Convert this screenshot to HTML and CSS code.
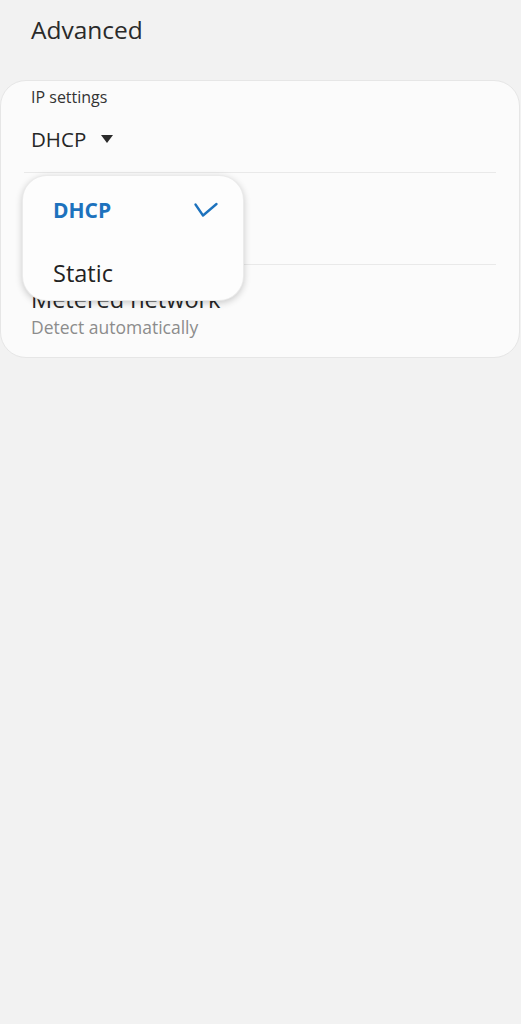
FILE: index.html
```html
<!DOCTYPE html>
<html lang="en">
<head>
<meta charset="utf-8">
<title>Advanced</title>
<link rel="stylesheet" href="styles.css">
</head>
<body>
<header class="header">
  <h1 class="title">Advanced</h1>
</header>
<section class="card">
  <div class="row">
    <div class="label">IP settings</div>
    <div class="value">
      <span>DHCP</span>
      <svg class="caret" width="12" height="8" viewBox="0 0 12 8"><path d="M0 0H12L6 8Z" fill="#2a2a2a"/></svg>
    </div>
  </div>
  <div class="row">
    <div class="label">Proxy</div>
    <div class="value">
      <span>None</span>
      <svg class="caret" width="12" height="8" viewBox="0 0 12 8"><path d="M0 0H12L6 8Z" fill="#2a2a2a"/></svg>
    </div>
  </div>
  <div class="row row-last">
    <div class="item-title">Metered network</div>
    <div class="item-sub">Detect automatically</div>
  </div>

  <div class="popup">
    <div class="option option-selected">
      <span>DHCP</span>
      <svg class="check" width="24" height="16" viewBox="0 0 24 16"><polyline points="1.5,2.5 9,13.5 22.5,2" fill="none" stroke="#1d72bd" stroke-width="2.3" stroke-linecap="round" stroke-linejoin="round"/></svg>
    </div>
    <div class="option option-last">
      <span>Static</span>
    </div>
  </div>
</section>
</body>
</html>
```
FILE: styles.css
```css
* { box-sizing: border-box; }
html, body {
  margin: 0;
  padding: 0;
}
body {
  background: #f2f2f2;
  font-family: "Open Sans", "Noto Sans", sans-serif;
  color: #252525;
  width: 521px;
  height: 1024px;
}
.header {
  padding: 14px 0 0 31px;
  height: 80px;
}
.title {
  margin: 0;
  font-size: 24.5px;
  line-height: 32px;
  font-weight: 400;
  color: #2a2a2a;
}
.card {
  position: relative;
  width: 520px;
  margin: 0;
  background: #fbfbfb;
  border: 1px solid #e6e6e6;
  border-radius: 26px;
  padding: 0 23px;
}
.row {
  display: flex;
  flex-direction: column;
  padding: 6px 7px 19px;
  border-bottom: 1px solid #e9e9e9;
}
.row-last {
  border-bottom: none;
  padding: 19px 7px 19px;
}
.label {
  font-size: 16px;
  line-height: 20px;
  color: #333;
}
.value {
  margin-top: 18px;
  display: flex;
  align-items: center;
  gap: 15px;
  font-size: 20.5px;
  line-height: 28px;
  color: #262626;
}
.item-title {
  font-size: 23.5px;
  line-height: 30px;
  color: #262626;
}
.item-sub {
  margin-top: 2px;
  font-size: 17.5px;
  line-height: 22px;
  color: #8c8c8c;
}
.popup {
  position: absolute;
  left: 21px;
  top: 94px;
  width: 222px;
  background: #fdfdfd;
  border: 1px solid rgba(0,0,0,0.07);
  border-radius: 25px;
  box-shadow: 0 2px 7px rgba(0,0,0,0.2);
  padding: 2px 0 0;
}
.option {
  display: flex;
  align-items: center;
  justify-content: space-between;
  padding: 18px 25px 17px 30px;
  font-size: 21px;
  line-height: 28px;
  color: #222;
}
.option-selected {
  color: #1d72bd;
  font-weight: 700;
}
.option-last {
  padding: 17px 25px 12px 30px;
  font-size: 23.5px;
  line-height: 30px;
}
```
